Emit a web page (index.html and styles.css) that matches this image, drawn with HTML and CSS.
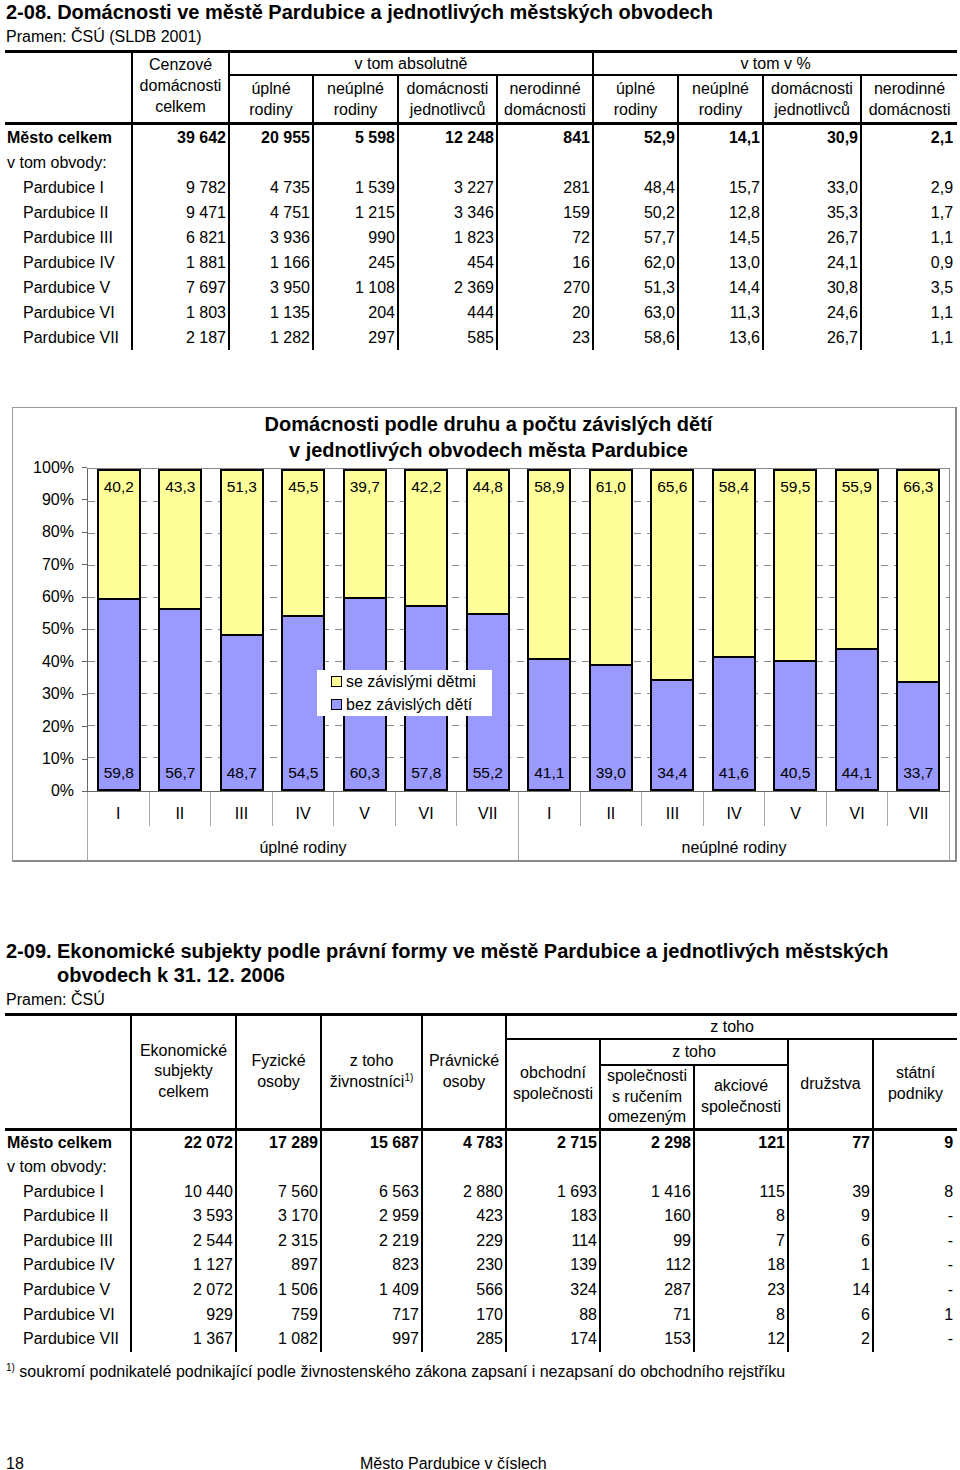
FILE: index.html
```html
<!DOCTYPE html>
<html lang="cs">
<head>
<meta charset="utf-8">
<title>Domácnosti a ekonomické subjekty – Pardubice</title>
<link rel="stylesheet" href="styles.css">
</head>
<body>
<div class="page">
  <h1 class="title">2-08. Domácnosti ve městě Pardubice a jednotlivých městských obvodech</h1>
  <p class="source">Pramen: ČSÚ (SLDB 2001)</p>

  <table class="data t1">
    <colgroup>
      <col class="w127"><col class="w97"><col class="w84"><col class="w85"><col class="w99">
      <col class="w96"><col class="w85"><col class="w85"><col class="w98"><col class="w96">
    </colgroup>
    <thead>
      <tr class="h1">
        <th class="lab" rowspan="2"></th>
        <th rowspan="2" class="cenz">Cenzové<br>domácnosti<br>celkem</th>
        <th colspan="4" class="grp">v tom absolutně</th>
        <th colspan="4" class="grp">v tom v %</th>
      </tr>
      <tr class="h2">
        <th>úplné<br>rodiny</th>
        <th>neúplné<br>rodiny</th>
        <th>domácnosti<br>jednotlivců</th>
        <th>nerodinné<br>domácnosti</th>
        <th>úplné<br>rodiny</th>
        <th>neúplné<br>rodiny</th>
        <th>domácnosti<br>jednotlivců</th>
        <th>nerodinné<br>domácnosti</th>
      </tr>
    </thead>
    <tbody>
      <tr class="total"><td class="lab">Město celkem</td><td>39 642</td><td>20 955</td><td>5 598</td><td>12 248</td><td>841</td><td>52,9</td><td>14,1</td><td>30,9</td><td class="last">2,1</td></tr>
      <tr><td class="lab">v tom obvody:</td><td></td><td></td><td></td><td></td><td></td><td></td><td></td><td></td><td class="last"></td></tr>
      <tr><td class="lab sub">Pardubice I</td><td>9 782</td><td>4 735</td><td>1 539</td><td>3 227</td><td>281</td><td>48,4</td><td>15,7</td><td>33,0</td><td class="last">2,9</td></tr>
      <tr><td class="lab sub">Pardubice II</td><td>9 471</td><td>4 751</td><td>1 215</td><td>3 346</td><td>159</td><td>50,2</td><td>12,8</td><td>35,3</td><td class="last">1,7</td></tr>
      <tr><td class="lab sub">Pardubice III</td><td>6 821</td><td>3 936</td><td>990</td><td>1 823</td><td>72</td><td>57,7</td><td>14,5</td><td>26,7</td><td class="last">1,1</td></tr>
      <tr><td class="lab sub">Pardubice IV</td><td>1 881</td><td>1 166</td><td>245</td><td>454</td><td>16</td><td>62,0</td><td>13,0</td><td>24,1</td><td class="last">0,9</td></tr>
      <tr><td class="lab sub">Pardubice V</td><td>7 697</td><td>3 950</td><td>1 108</td><td>2 369</td><td>270</td><td>51,3</td><td>14,4</td><td>30,8</td><td class="last">3,5</td></tr>
      <tr><td class="lab sub">Pardubice VI</td><td>1 803</td><td>1 135</td><td>204</td><td>444</td><td>20</td><td>63,0</td><td>11,3</td><td>24,6</td><td class="last">1,1</td></tr>
      <tr><td class="lab sub">Pardubice VII</td><td>2 187</td><td>1 282</td><td>297</td><td>585</td><td>23</td><td>58,6</td><td>13,6</td><td>26,7</td><td class="last">1,1</td></tr>
    </tbody>
  </table>

  <div class="chart">
    <div class="chart-title">Domácnosti podle druhu a počtu závislých dětí<br>v jednotlivých obvodech města Pardubice</div>
    <div class="chart-body">
      <div class="yaxis">
        <div class="yl">100%<i></i></div><div class="yl">90%<i></i></div><div class="yl">80%<i></i></div>
        <div class="yl">70%<i></i></div><div class="yl">60%<i></i></div><div class="yl">50%<i></i></div>
        <div class="yl">40%<i></i></div><div class="yl">30%<i></i></div><div class="yl">20%<i></i></div>
        <div class="yl">10%<i></i></div><div class="yl">0%<i></i></div>
      </div>
      <div class="plot">
        <div class="grid">
          <div class="gl hide"></div><div class="gl"></div><div class="gl"></div><div class="gl"></div>
          <div class="gl"></div><div class="gl"></div><div class="gl"></div><div class="gl"></div>
          <div class="gl"></div><div class="gl"></div><div class="gl hide"></div>
        </div>
        <div class="bars">
          <div class="cat"><div class="bar"><div class="yel">40,2</div><div class="blu" style="height:59.8%">59,8</div></div></div>
          <div class="cat"><div class="bar"><div class="yel">43,3</div><div class="blu" style="height:56.7%">56,7</div></div></div>
          <div class="cat"><div class="bar"><div class="yel">51,3</div><div class="blu" style="height:48.7%">48,7</div></div></div>
          <div class="cat"><div class="bar"><div class="yel">45,5</div><div class="blu" style="height:54.5%">54,5</div></div></div>
          <div class="cat"><div class="bar"><div class="yel">39,7</div><div class="blu" style="height:60.3%">60,3</div></div></div>
          <div class="cat"><div class="bar"><div class="yel">42,2</div><div class="blu" style="height:57.8%">57,8</div></div></div>
          <div class="cat"><div class="bar"><div class="yel">44,8</div><div class="blu" style="height:55.2%">55,2</div></div></div>
          <div class="cat"><div class="bar"><div class="yel">58,9</div><div class="blu" style="height:41.1%">41,1</div></div></div>
          <div class="cat"><div class="bar"><div class="yel">61,0</div><div class="blu" style="height:39.0%">39,0</div></div></div>
          <div class="cat"><div class="bar"><div class="yel">65,6</div><div class="blu" style="height:34.4%">34,4</div></div></div>
          <div class="cat"><div class="bar"><div class="yel">58,4</div><div class="blu" style="height:41.6%">41,6</div></div></div>
          <div class="cat"><div class="bar"><div class="yel">59,5</div><div class="blu" style="height:40.5%">40,5</div></div></div>
          <div class="cat"><div class="bar"><div class="yel">55,9</div><div class="blu" style="height:44.1%">44,1</div></div></div>
          <div class="cat"><div class="bar"><div class="yel">66,3</div><div class="blu" style="height:33.7%">33,7</div></div></div>
        </div>
        <div class="legend">
          <div class="lg-item"><span class="sw sw-y"></span>se závislými dětmi</div>
          <div class="lg-item"><span class="sw sw-b"></span>bez závislých dětí</div>
        </div>
      </div>
    </div>
    <div class="xaxis">
      <div class="xgrp">
        <div class="xcats"><span>I</span><span>II</span><span>III</span><span>IV</span><span>V</span><span>VI</span><span>VII</span></div>
        <div class="xname">úplné rodiny</div>
      </div>
      <div class="xgrp">
        <div class="xcats"><span>I</span><span>II</span><span>III</span><span>IV</span><span>V</span><span>VI</span><span>VII</span></div>
        <div class="xname">neúplné rodiny</div>
      </div>
    </div>
  </div>

  <h1 class="title title2"><span class="num">2-09.</span><span>Ekonomické subjekty podle právní formy ve městě Pardubice a jednotlivých městských obvodech k 31. 12. 2006</span></h1>
  <p class="source">Pramen: ČSÚ</p>

  <table class="data t2">
    <colgroup>
      <col class="w126"><col class="w105"><col class="w85"><col class="w101"><col class="w84">
      <col class="w94"><col class="w94"><col class="w94"><col class="w85"><col class="w84">
    </colgroup>
    <thead>
      <tr class="r1">
        <th class="lab" rowspan="3"></th>
        <th rowspan="3">Ekonomické<br>subjekty<br>celkem</th>
        <th rowspan="3">Fyzické<br>osoby</th>
        <th rowspan="3">z toho<br>živnostníci<sup>1)</sup></th>
        <th rowspan="3">Právnické<br>osoby</th>
        <th colspan="5" class="grp">z toho</th>
      </tr>
      <tr class="r2">
        <th rowspan="2">obchodní<br>společnosti</th>
        <th colspan="2" class="grp">z toho</th>
        <th rowspan="2">družstva</th>
        <th rowspan="2">státní<br>podniky</th>
      </tr>
      <tr class="r3">
        <th>společnosti<br>s ručením<br>omezeným</th>
        <th>akciové<br>společnosti</th>
      </tr>
    </thead>
    <tbody>
      <tr class="total"><td class="lab">Město celkem</td><td>22 072</td><td>17 289</td><td>15 687</td><td>4 783</td><td>2 715</td><td>2 298</td><td>121</td><td>77</td><td class="last">9</td></tr>
      <tr><td class="lab">v tom obvody:</td><td></td><td></td><td></td><td></td><td></td><td></td><td></td><td></td><td class="last"></td></tr>
      <tr><td class="lab sub">Pardubice I</td><td>10 440</td><td>7 560</td><td>6 563</td><td>2 880</td><td>1 693</td><td>1 416</td><td>115</td><td>39</td><td class="last">8</td></tr>
      <tr><td class="lab sub">Pardubice II</td><td>3 593</td><td>3 170</td><td>2 959</td><td>423</td><td>183</td><td>160</td><td>8</td><td>9</td><td class="last">-</td></tr>
      <tr><td class="lab sub">Pardubice III</td><td>2 544</td><td>2 315</td><td>2 219</td><td>229</td><td>114</td><td>99</td><td>7</td><td>6</td><td class="last">-</td></tr>
      <tr><td class="lab sub">Pardubice IV</td><td>1 127</td><td>897</td><td>823</td><td>230</td><td>139</td><td>112</td><td>18</td><td>1</td><td class="last">-</td></tr>
      <tr><td class="lab sub">Pardubice V</td><td>2 072</td><td>1 506</td><td>1 409</td><td>566</td><td>324</td><td>287</td><td>23</td><td>14</td><td class="last">-</td></tr>
      <tr><td class="lab sub">Pardubice VI</td><td>929</td><td>759</td><td>717</td><td>170</td><td>88</td><td>71</td><td>8</td><td>6</td><td class="last">1</td></tr>
      <tr><td class="lab sub">Pardubice VII</td><td>1 367</td><td>1 082</td><td>997</td><td>285</td><td>174</td><td>153</td><td>12</td><td>2</td><td class="last">-</td></tr>
    </tbody>
  </table>

  <p class="note"><sup>1)</sup> soukromí podnikatelé podnikající podle živnostenského zákona zapsaní i nezapsaní do obchodního rejstříku</p>

  <footer class="foot"><span class="pg">18</span><span class="pub">Město Pardubice v číslech</span></footer>
</div>
</body>
</html>
```

FILE: styles.css
```css
* { box-sizing: border-box; }
html, body { margin: 0; padding: 0; background: #fff; }
body {
  font-family: "Liberation Sans", Arial, sans-serif;
  font-size: 16px;
  color: #000;
}
.page { width: 960px; padding: 0 3px 0 5px; }

.title {
  margin: 0;
  padding-left: 1px;
  font-size: 20px;
  font-weight: bold;
  line-height: 24px;
}
.source { margin: 3px 0 3px 1px; line-height: 20px; }

/* ---------- data tables ---------- */
.data {
  border-collapse: collapse;
  table-layout: fixed;
  width: 952px;
  border-top: 3px solid #000;
}
.data thead { border-bottom: 3px solid #000; }
.data th, .data td {
  border-left: 2px solid #000;
  padding: 0;
}
.data .lab { border-left: none; }
.data th {
  font-weight: normal;
  text-align: center;
  vertical-align: middle;
  line-height: 21px;
}
.data th.grp { border-bottom: 2px solid #000; }
.data td {
  text-align: right;
  padding-right: 2px;
  white-space: nowrap;
  height: 25px;
  line-height: 25px;
}
.data td.lab { text-align: left; padding-left: 2px; }
.data td.sub { padding-left: 18px; }
.data td.last { padding-right: 4px; }
.data tr.total td { font-weight: bold; }

.w127 { width: 127px; } .w97 { width: 97px; } .w84 { width: 84px; } .w85 { width: 85px; }
.w99 { width: 99px; } .w96 { width: 96px; } .w98 { width: 98px; } .w126 { width: 126px; }
.w105 { width: 105px; } .w101 { width: 101px; } .w94 { width: 94px; }

.t1 .h1 { height: 22px; }
.t1 .h2 { height: 48px; }
.t1 .cenz { padding-bottom: 4px; }

.t2 th { line-height: 20.5px; }
.t2 .r1 { height: 25px; }
.t2 .r2 { height: 26px; }
.t2 .r3 { height: 61px; }
.t2 td { height: 24.6px; line-height: 24.6px; }
.t2 sup { font-size: 10px; line-height: 0; vertical-align: 6px; }

/* ---------- chart ---------- */
.chart {
  margin: 57px 0 0 7px;
  width: 945px;
  border: 1px solid #9a9a9a;
  border-right: 2px solid #8a8a8a;
  border-bottom: 2px solid #8a8a8a;
  position: relative;
}
.chart-title {
  padding: 3px 0 0 9px;
  text-align: center;
  font-weight: bold;
  font-size: 20px;
  line-height: 26px;
}
.chart-body { display: flex; margin-top: 5px; }
.yaxis {
  width: 74px;
  height: 342px;
  margin: -9px 0 -9px;
  display: flex;
  flex-direction: column;
  justify-content: space-between;
}
.yl {
  height: 18px;
  line-height: 18px;
  display: flex;
  justify-content: flex-end;
  align-items: center;
  gap: 8px;
}
.yl i { display: block; width: 5px; height: 1px; background: #666; }

.plot {
  position: relative;
  width: 863px;
  height: 324px;
  border-top: 1px solid #8a8a8a;
  border-right: 1px solid #8a8a8a;
  border-left: 1px solid #666;
  border-bottom: 1px solid #666;
}
.grid {
  position: absolute;
  inset: 0;
  display: flex;
  flex-direction: column;
  justify-content: space-between;
}
.gl {
  height: 1px;
  background: repeating-linear-gradient(to right, #8c8c8c 0 7px, transparent 7px 13px);
}
.gl.hide { visibility: hidden; }
.bars { position: relative; display: flex; height: 100%; }
.cat { flex: 1; display: flex; justify-content: center; }
.bar {
  width: 44px;
  height: 100%;
  border: 2px solid #000;
  display: flex;
  flex-direction: column;
  font-size: 15.5px;
  line-height: 18px;
  text-align: center;
}
.yel { flex: 1; background: #ffff99; padding-top: 7px; }
.blu {
  background: #9999ff;
  border-top: 2px solid #000;
  display: flex;
  flex-direction: column;
  justify-content: flex-end;
  padding-bottom: 7px;
}
.legend {
  position: absolute;
  left: 229px;
  top: 201px;
  width: 175px;
  height: 46px;
  background: #fff;
  padding-left: 14px;
  line-height: 23px;
}
.lg-item { display: flex; align-items: center; white-space: nowrap; }
.sw {
  display: inline-block;
  width: 11px;
  height: 11px;
  border: 1.5px solid #000;
  margin-right: 4px;
}
.sw-y { background: #ffff99; }
.sw-b { background: #9999ff; }

.xaxis { display: flex; margin-left: 74px; width: 863px; height: 68px; }
.xgrp { flex: 1; border-left: 1px solid #a8a8a8; }
.xgrp:last-child { border-right: 1px solid #a8a8a8; }
.xcats { display: flex; height: 34px; }
.xcats span {
  flex: 1;
  text-align: center;
  line-height: 18px;
  padding-top: 13px;
}
.xcats span + span { border-left: 1px solid #a8a8a8; }
.xname { text-align: center; line-height: 18px; padding-top: 13px; }

/* ---------- second section ---------- */
.title2 { margin-top: 77px; display: flex; }
.title2 .num { flex: 0 0 51px; }
.title2 span + span { flex: 1; }

.note { margin: 10px 0 0 1px; line-height: 20px; }
.note sup { font-size: 10px; line-height: 0; vertical-align: 6px; }

.foot { display: flex; margin-top: 72px; line-height: 20px; padding-left: 1px; }
.foot .pg { width: 354px; }
```
